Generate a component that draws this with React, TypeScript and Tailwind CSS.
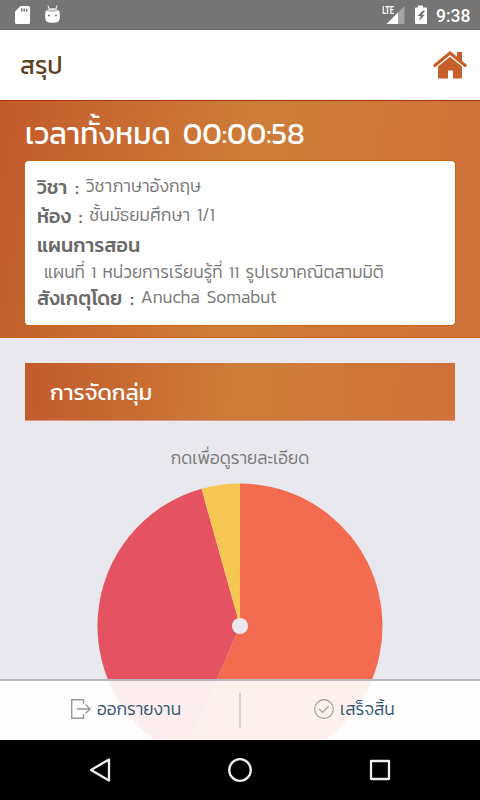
import React from "react";

const SLICES = [
  { value: 13, color: "#f36c4f" },
  { value: 9, color: "#e55362" },
  { value: 1, color: "#f6c752" },
];

const R = 142.5;

function Pie() {
  const total = SLICES.reduce((sum, s) => sum + s.value, 0);
  let start = 0;
  const paths = SLICES.map((s) => {
    const a0 = (start / total) * Math.PI * 2;
    start += s.value;
    const a1 = (start / total) * Math.PI * 2;
    const p = (a: number) => `${(Math.sin(a) * R).toFixed(2)} ${(-Math.cos(a) * R).toFixed(2)}`;
    const large = a1 - a0 > Math.PI ? 1 : 0;
    return <path key={s.color} fill={s.color} d={`M0 0L${p(a0)}A${R} ${R} 0 ${large} 1 ${p(a1)}Z`} />;
  });
  return (
    <svg width="286" height="286" viewBox="-143 -143 286 286" className="shrink-0">
      {paths}
      <circle r="8" fill="#e9e8ee" />
    </svg>
  );
}

function StatusBar() {
  return (
    <div className="flex h-[30px] shrink-0 items-center justify-between border-b border-[#6a686b] bg-[#757575] px-[10px] text-white">
      <div className="flex items-center gap-[15px] pl-[5px]">
        <svg width="15" height="18" viewBox="0 0 15 18">
          <path fill="#fff" d="M5.5 0H13.5Q15 0 15 1.5V16.5Q15 18 13.5 18H1.5Q0 18 0 16.5V5.5Z" />
          <path fill="#757575" d="M6 2.400h1.500v3.200H6zM8.500 2.400h1.500v3.200H8.500zM11 2.400h1.500v3.200H11z" />
        </svg>
        <svg width="15" height="18" viewBox="0 0 15 18" className="-mt-[2px]">
          <path d="M3 0.500L4.200 4M12 0.500L10.800 4" stroke="#fff" strokeWidth="1" />
          <path fill="#ddd" d="M2 5.800Q3 3 7.500 3T13 5.800Z" />
          <path fill="#fff" d="M0.800 5.500Q7.500 7.500 14.200 5.500Q16 14 13.500 16.500Q11.500 17.800 7.500 17.800T1.500 16.500Q-1 14 .8 5.500Z" />
          <circle cx="4" cy="10.500" r="1" fill="#757575" />
          <circle cx="11" cy="10.500" r="1" fill="#757575" />
        </svg>
      </div>
      <div className="flex items-center">
        <svg width="54" height="20" viewBox="0 0 54 20">
          <path fill="#a3a3a3" d="M22.500 1V19H4.500Z" />
          <path fill="#fff" d="M16 7.500V19H4.500Z" />
          <path fill="#757575" d="M0 0h13v9.500H0z" />
          <text x="0.300" y="9" fill="#fff" fontSize="11" fontWeight="700" textLength="11.500" lengthAdjust="spacingAndGlyphs" fontFamily="Roboto, sans-serif">LTE</text>
          <path fill="#fff" d="M36 .5h5v2h3q1 0 1 1v14.500q0 1-1 1H34q-1 0-1-1V3.500q0-1 1-1h2z" />
          <path fill="#757575" d="M41 5.500L35.500 11h3.200L37 16L42.800 9.700h-3L43 6.300z" />
        </svg>
        <span className="w-[34px] pt-[2px] font-['Roboto'] text-[17.5px] leading-[20px] font-medium whitespace-nowrap">9:38</span>
      </div>
    </div>
  );
}

function Row({ label, value }: { label: string; value: string }) {
  return (
    <div className="flex h-[29px] items-center whitespace-nowrap">
      <span className="pt-[3px] text-[19.8px] font-medium [word-spacing:3.500px] text-[#6a6a6a]">{label}</span>
      <span className="ml-[7px] -mt-px text-[17.4px] font-light [word-spacing:3px] text-[#787878]">{value}</span>
    </div>
  );
}

export default function App() {
  return (
    <div className="flex h-[800px] w-[480px] flex-col overflow-hidden bg-[#e9e8ee] font-['Kanit','Noto_Sans_Thai','Noto_Sans',sans-serif]">
      <StatusBar />
      <header className="flex h-[70px] shrink-0 items-center justify-between bg-white pr-[13px] pl-[20px]">
        <h1 className="pt-[3px] text-[24.5px] text-[#5c4223]">สรุป</h1>
        <svg width="34" height="28" viewBox="0 0 34 28" fill="#c75f2b">
          <path d="M24 1h5v10l-5-4.500z" />
          <path d="M1.800 14.500L17 2L32.200 14.500" fill="none" stroke="#c75f2b" strokeWidth="3" strokeLinecap="round" strokeLinejoin="miter" />
          <path d="M5 15.500L17 5.800L29 15.500V26.500q0 1-1 1H20V19.500H15v8H6q-1 0-1-1z" />
        </svg>
      </header>
      <main className="relative h-[640px] shrink-0 overflow-hidden">
        <section className="h-[238px] border-t border-b border-t-[#a03800] border-b-[#cb6512] bg-[linear-gradient(100deg,#c35a2b_0%,#cd7d39_50%,#cf7139_100%)] px-[25px]">
          <div className="flex h-[60px] items-center pt-[5px] text-[30px] [word-spacing:5px] whitespace-nowrap text-white">เวลาทั้งหมด 00:00:58</div>
          <div className="h-[164px] rounded-[4px] bg-white px-[12px] pt-[11px] shadow-[0_0_0_1px_#cb6512]">
            <Row label="วิชา :" value="วิชาภาษาอังกฤษ" />
            <Row label="ห้อง :" value="ชั้นมัธยมศึกษา 1/1" />
            <div className="flex h-[28px] items-center pt-[3px] text-[19.8px] font-medium text-[#6a6a6a]">แผนการสอน</div>
            <div className="flex h-[25px] items-center pt-[4px] pl-[7px] text-[17.3px] font-light [word-spacing:2.300px] whitespace-nowrap text-[#787878]">แผนที่ 1 หน่วยการเรียนรู้ที่ 11 รูปเรขาคณิตสามมิติ</div>
            <Row label="สังเกตุโดย :" value="Anucha Somabut" />
          </div>
        </section>
        <section className="flex flex-col items-center px-[25px] pt-[25px]">
          <h2 className="flex h-[58px] w-full items-center border-b border-[#dd9a85] bg-[linear-gradient(95deg,#c35a2b_0%,#cd7d39_50%,#cf7139_100%)] pt-[2px] pl-[25px] text-[22.3px] text-white">การจัดกลุ่ม</h2>
          <p className="mt-[24px] mb-[10px] flex h-[28px] items-center text-[17.3px] font-light text-[#787878]">กดเพื่อดูรายละเอียด</p>
          <Pie />
        </section>
        <nav className="absolute inset-x-0 bottom-0 flex h-[61px] border-t-2 border-[#bcbac0] bg-white/90 text-[17.3px] font-light text-[#345671]">
          <div className="flex h-full w-[239px] items-center gap-[6px] pl-[71px]">
            <svg width="20" height="20" viewBox="0 0 20 20" fill="none" stroke="#999" strokeWidth="1.400" className="-mt-[3px]">
              <path d="M12.500 5V.7H.7v18.600h11.800V15M6 10h13M14.500 5.500L19 10l-4.500 4.500" />
            </svg>
            <span className="-mt-[2px]">ออกรายงาน</span>
          </div>
          <div className="mt-[12px] h-[35px] w-[2px] bg-[#dbd2d4]" />
          <div className="flex h-full flex-1 items-center gap-[6px] pl-[73px]">
            <svg width="20" height="20" viewBox="0 0 20 20" fill="none" stroke="#a09c9c" strokeWidth="1.200" className="-mt-[3px]">
              <circle cx="10" cy="10" r="9.300" />
              <path d="M5.200 10l3.500 3.500L14.700 7" />
            </svg>
            <span className="-mt-[2px]">เสร็จสิ้น</span>
          </div>
        </nav>
      </main>
      <footer className="flex h-[60px] shrink-0 items-center justify-between bg-black px-[89px]">
        <svg width="22" height="26" viewBox="0 0 22 26" fill="none" stroke="#eee" strokeWidth="2.300" strokeLinejoin="round">
          <path d="M20 2.500v21L2 13z" />
        </svg>
        <svg width="26" height="26" viewBox="0 0 26 26" fill="none" stroke="#eee" strokeWidth="2.300">
          <circle cx="13" cy="13" r="10.800" />
        </svg>
        <svg width="22" height="22" viewBox="0 0 22 22" fill="none" stroke="#eee" strokeWidth="2.300" strokeLinejoin="round">
          <path d="M2 2h18v18H2z" />
        </svg>
      </footer>
    </div>
  );
}
